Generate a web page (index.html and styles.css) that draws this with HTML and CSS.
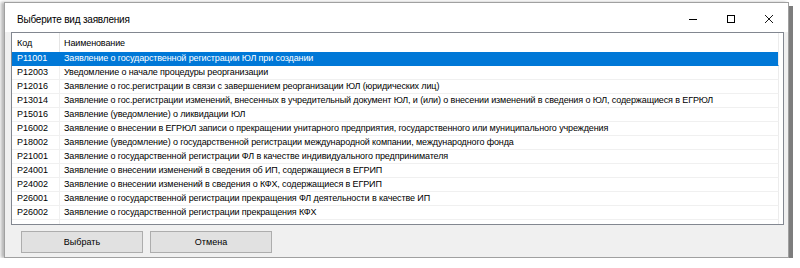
FILE: index.html
```html
<!DOCTYPE html>
<html lang="ru">
<head>
    <meta charset="UTF-8">
    <title>Выберите вид заявления</title>
    <link rel="stylesheet" href="styles.css">
</head>
<body>
    <div class="window">
        <div class="titlebar">
            <span class="title">Выберите вид заявления</span>
            <div class="controls">
                <span class="ctl"><svg width="8" height="8" viewBox="0 0 8 8"><path d="M0 4.5h8" stroke="#000" stroke-width="1"/></svg></span>
                <span class="ctl"><svg width="8" height="8" viewBox="0 0 8 8"><rect x="0.5" y="0.5" width="7" height="7" fill="none" stroke="#000" stroke-width="1"/></svg></span>
                <span class="ctl"><svg width="8" height="8" viewBox="0 0 8 8"><path d="M0 0L8 8M8 0L0 8" stroke="#000" stroke-width="0.9"/></svg></span>
            </div>
        </div>

        <div class="client">
            <div class="grid">
                <div class="row head">
                    <div class="code">Код</div>
                    <div class="name">Наименование</div>
                </div>
                <div class="row selected">
                    <div class="code">P11001</div>
                    <div class="name">Заявление о государственной регистрации ЮЛ при создании</div>
                </div>
                <div class="row">
                    <div class="code">P12003</div>
                    <div class="name">Уведомление о начале процедуры реорганизации</div>
                </div>
                <div class="row">
                    <div class="code">P12016</div>
                    <div class="name">Заявление о гос.регистрации в связи с завершением реорганизации ЮЛ (юридических лиц)</div>
                </div>
                <div class="row">
                    <div class="code">P13014</div>
                    <div class="name">Заявление о гос.регистрации изменений, внесенных в учредительный документ ЮЛ, и (или) о внесении изменений в сведения о ЮЛ, содержащиеся в ЕГРЮЛ</div>
                </div>
                <div class="row">
                    <div class="code">P15016</div>
                    <div class="name">Заявление (уведомление) о ликвидации ЮЛ</div>
                </div>
                <div class="row">
                    <div class="code">P16002</div>
                    <div class="name">Заявление о внесении в ЕГРЮЛ записи о прекращении унитарного предприятия, государственного или муниципального учреждения</div>
                </div>
                <div class="row">
                    <div class="code">P18002</div>
                    <div class="name">Заявление (уведомление) о государственной регистрации международной компании, международного фонда</div>
                </div>
                <div class="row">
                    <div class="code">P21001</div>
                    <div class="name">Заявление о государственной регистрации ФЛ в качестве индивидуального предпринимателя</div>
                </div>
                <div class="row">
                    <div class="code">P24001</div>
                    <div class="name">Заявление о внесении изменений в сведения об ИП, содержащиеся в ЕГРИП</div>
                </div>
                <div class="row">
                    <div class="code">P24002</div>
                    <div class="name">Заявление о внесении изменений в сведения о КФХ, содержащиеся в ЕГРИП</div>
                </div>
                <div class="row">
                    <div class="code">P26001</div>
                    <div class="name">Заявление о государственной регистрации прекращения ФЛ деятельности в качестве ИП</div>
                </div>
                <div class="row">
                    <div class="code">P26002</div>
                    <div class="name">Заявление о государственной регистрации прекращения КФХ</div>
                </div>
                <div class="row filler">
                    <div class="code"></div>
                    <div class="name"></div>
                </div>
            </div>

            <div class="buttons">
                <button class="btn">Выбрать</button>
                <button class="btn">Отмена</button>
            </div>
        </div>
    </div>
</body>
</html>
```

FILE: styles.css
```css
/* Reset */
* {
    margin: 0;
    padding: 0;
    box-sizing: border-box;
}

body {
    background: #fff;
    font-family: 'Liberation Sans', Arial, sans-serif;
    color: #000;
}

.window {
    margin: 2px 0 0 4px;
    width: 785px;
    height: 256px;
    background: #f0f0f0;
    border: 1px solid #a0a0a0;
    box-shadow: 4px 4px 0 #7d7d7d, -3px 0 3px #b8b8b8;
    display: flex;
    flex-direction: column;
}

.titlebar {
    height: 29px;
    background: #fff;
    display: flex;
    align-items: center;
    justify-content: space-between;
    padding: 3px 0 0 12px;
}

.title {
    font-size: 10px;
    letter-spacing: -0.2px;
}

.controls {
    display: flex;
    height: 100%;
}

.ctl {
    width: 38px;
    display: flex;
    align-items: center;
    justify-content: center;
}

.ctl svg {
    display: block;
}

.client {
    flex: 1;
    padding: 0 4px 0 6px;
    display: flex;
    flex-direction: column;
}

.grid {
    height: 193px;
    background: #fff;
    border: 1px solid #828790;
    padding-right: 4px;
    display: flex;
    flex-direction: column;
    overflow: hidden;
}

.row {
    display: flex;
    height: 14px;
    border-bottom: 1px solid #f0f0f0;
    font-size: 9px;
    letter-spacing: -0.12px;
    line-height: 13px;
    border-right: 1px solid #ececec;
}

.row.head {
    height: 19px;
    line-height: 20px;
    border-bottom: 0;
}

.row.filler {
    flex: 1;
    border-bottom: 0;
}

.code {
    width: 48px;
    padding-left: 5px;
    border-right: 1px solid #f0f0f0;
    white-space: nowrap;
    letter-spacing: 0;
}

.name {
    flex: 1;
    padding-left: 4px;
    white-space: nowrap;
    overflow: hidden;
}

.row.head .code {
    border-right-color: #e5e5e5;
}

.row.selected {
    background: #0078d7;
    color: #fff;
    border-bottom-color: #0078d7;
}

.row.selected .code {
    border-right-color: #0078d7;
}

.buttons {
    display: flex;
    gap: 7px;
    padding: 6px 0 0 10px;
}

.btn {
    width: 122px;
    height: 22px;
    background: #e1e1e1;
    border: 1px solid #adadad;
    font-family: 'Liberation Sans', Arial, sans-serif;
    font-size: 9px;
    color: #000;
}
```
